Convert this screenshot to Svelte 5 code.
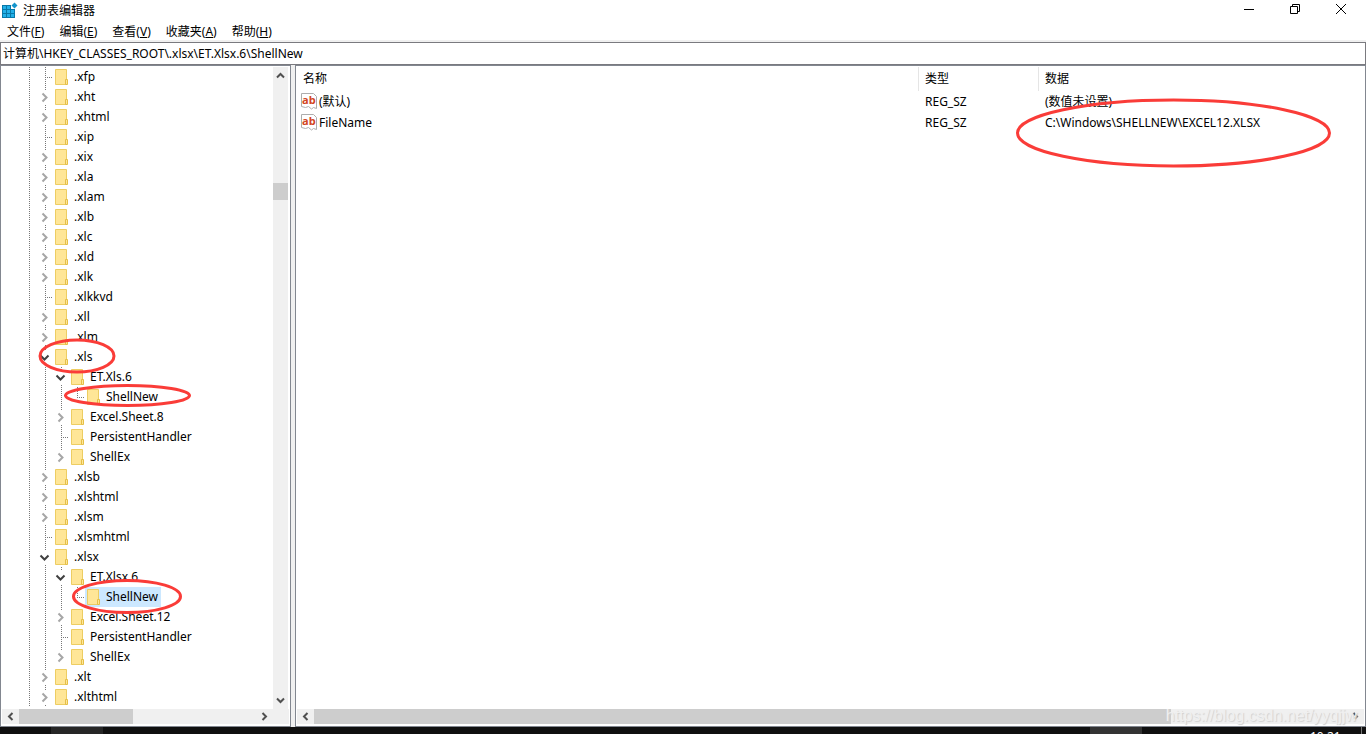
<script>
  const menus = [
    ['文件', 'F'],
    ['编辑', 'E'],
    ['查看', 'V'],
    ['收藏夹', 'A'],
    ['帮助', 'H']
  ];

  // state: 'leaf' | 'closed' | 'open'; last marks the final child of its parent
  const rows = [
    { name: '.xfp', depth: 1, state: 'leaf' },
    { name: '.xht', depth: 1, state: 'closed' },
    { name: '.xhtml', depth: 1, state: 'closed' },
    { name: '.xip', depth: 1, state: 'leaf' },
    { name: '.xix', depth: 1, state: 'closed' },
    { name: '.xla', depth: 1, state: 'closed' },
    { name: '.xlam', depth: 1, state: 'closed' },
    { name: '.xlb', depth: 1, state: 'closed' },
    { name: '.xlc', depth: 1, state: 'closed' },
    { name: '.xld', depth: 1, state: 'closed' },
    { name: '.xlk', depth: 1, state: 'closed' },
    { name: '.xlkkvd', depth: 1, state: 'leaf' },
    { name: '.xll', depth: 1, state: 'closed' },
    { name: '.xlm', depth: 1, state: 'closed' },
    { name: '.xls', depth: 1, state: 'open' },
    { name: 'ET.Xls.6', depth: 2, state: 'open' },
    { name: 'ShellNew', depth: 3, state: 'leaf', last: true },
    { name: 'Excel.Sheet.8', depth: 2, state: 'closed' },
    { name: 'PersistentHandler', depth: 2, state: 'leaf' },
    { name: 'ShellEx', depth: 2, state: 'closed', last: true },
    { name: '.xlsb', depth: 1, state: 'closed' },
    { name: '.xlshtml', depth: 1, state: 'closed' },
    { name: '.xlsm', depth: 1, state: 'closed' },
    { name: '.xlsmhtml', depth: 1, state: 'leaf' },
    { name: '.xlsx', depth: 1, state: 'open' },
    { name: 'ET.Xlsx.6', depth: 2, state: 'open' },
    { name: 'ShellNew', depth: 3, state: 'leaf', last: true, selected: true },
    { name: 'Excel.Sheet.12', depth: 2, state: 'closed' },
    { name: 'PersistentHandler', depth: 2, state: 'leaf' },
    { name: 'ShellEx', depth: 2, state: 'closed', last: true },
    { name: '.xlt', depth: 1, state: 'closed' },
    { name: '.xlthtml', depth: 1, state: 'closed' }
  ];

  const values = [
    { name: '(默认)', type: 'REG_SZ', data: '(数值未设置)' },
    { name: 'FileName', type: 'REG_SZ', data: 'C:\\Windows\\SHELLNEW\\EXCEL12.XLSX' }
  ];

  let address = $state('计算机\\HKEY_CLASSES_ROOT\\.xlsx\\ET.Xlsx.6\\ShellNew');
</script>

{#snippet arrow(d)}
  <svg class="arrow" width="9" height="9" viewBox="0 0 9 9" aria-hidden="true"><path {d} /></svg>
{/snippet}

<div class="window">
  <header class="titlebar">
    <svg width="17" height="17" viewBox="0 0 17 17" aria-hidden="true">
      <path d="M0 3h9v4h4v9H0z" fill="#0878a8" />
      <path d="M1 4h3v3H1zM5 4h3v3H5zM1 8h3v3H1zM5 8h3v3H5zM9 8h3v3H9zM1 12h3v3H1zM5 12h3v3H5zM9 12h3v3H9z" fill="#22b0e8" />
      <path d="M12.500 .5l3 3-3 3-3-3z" fill="#1595cc" />
    </svg>
    <h1>注册表编辑器</h1>
    <div class="controls">
      <button aria-label="最小化"><svg width="12" height="12" viewBox="0 0 12 12"><path d="M1 6.500h10" /></svg></button>
      <button aria-label="还原"><svg width="12" height="12" viewBox="0 0 12 12"><path d="M1.500 3.500h7v7h-7zM3.500 3.500v-2h7v7h-2" /></svg></button>
      <button aria-label="关闭"><svg width="12" height="12" viewBox="0 0 12 12"><path d="M1 1l10 10M11 1L1 11" /></svg></button>
    </div>
  </header>

  <nav class="menubar">
    {#each menus as [label, key]}
      <button>{label}(<u>{key}</u>)</button>
    {/each}
  </nav>

  <input class="address" aria-label="地址" bind:value={address} />

  <main>
    <section class="pane tree-pane">
      <div class="tree-body">
        <ul class="tree">
          {#each rows as row}
            <li>
              {#each Array(row.depth) as _}
                <span class="guide"></span>
              {/each}
              <span class="guide node {row.state}" class:last={row.last}>
                {#if row.state !== 'leaf'}
                  <svg width="11" height="11" viewBox="0 0 11 11" aria-hidden="true">
                    <path d={row.state === 'open' ? 'M1.500 3.500l4 4 4-4' : 'M3.500 1.500l4 4-4 4'} />
                  </svg>
                {/if}
              </span>
              <button class:selected={row.selected}>
                <svg width="14" height="17" viewBox="0 0 14 17" aria-hidden="true">
                  <path d="M.5.5h11v15H.5z" fill="#ffe697" stroke="#edcd62" />
                  <path d="M10.500 10.500h2v5h-2z" fill="#ffe697" stroke="#e5bf48" />
                </svg>
                <span>{row.name}</span>
              </button>
            </li>
          {/each}
        </ul>
        <div class="vscroll">
          {@render arrow('M1 6.500l3.500-3.500 3.500 3.500')}
          <div class="vtrack"><div class="vthumb"></div></div>
          {@render arrow('M1 2.500l3.500 3.500 3.500-3.500')}
        </div>
      </div>
      <div class="hscroll">
        {@render arrow('M6.500 1l-3.500 3.500 3.500 3.500')}
        <div class="htrack"><div class="hthumb" style="width: 48%"></div></div>
        {@render arrow('M2.500 1l3.500 3.500-3.500 3.500')}
      </div>
    </section>

    <section class="pane list-pane">
      <div class="list-body">
        <table>
          <colgroup><col class="c1" /><col class="c2" /><col /></colgroup>
          <thead>
            <tr><th>名称</th><th>类型</th><th>数据</th></tr>
          </thead>
          <tbody>
            {#each values as v}
              <tr>
                <td>
                  <div class="name">
                    <svg width="17" height="17" viewBox="0 0 17 17" aria-hidden="true">
                      <path d="M.5.500h12l3 3v12l-3-1-2 1.500-3-2.500-3 1-4-1z" fill="#fff" stroke="#adadad" />
                      <text x="1" y="11">ab</text>
                    </svg>
                    <span>{v.name}</span>
                  </div>
                </td>
                <td>{v.type}</td>
                <td>{v.data}</td>
              </tr>
            {/each}
          </tbody>
        </table>
      </div>
      <div class="hscroll">
        {@render arrow('M6.500 1l-3.500 3.500 3.500 3.500')}
        <div class="htrack"><div class="hthumb" style="width: 83%"></div></div>
        {@render arrow('M2.500 1l3.500 3.500-3.500 3.500')}
      </div>
    </section>
  </main>

  <footer class="taskbar">
    <span class="task"></span>
    <span class="task second"></span>
    <time>10:21</time>
  </footer>

  <svg class="marks" aria-hidden="true">
    <ellipse cx="77" cy="356" rx="37" ry="16" />
    <ellipse cx="127.500" cy="395.500" rx="62" ry="10" />
    <ellipse cx="127" cy="596.500" rx="53.500" ry="16" />
    <ellipse cx="1173.500" cy="133" rx="156" ry="33" />
  </svg>
  <span class="watermark">https://blog.csdn.net/yyqjjw</span>
</div>

<style>
  :global(body) {
    margin: 0;
    overflow: hidden;
  }
  .window {
    position: relative;
    display: flex;
    flex-direction: column;
    height: 100vh;
    overflow: hidden;
    background: #fff;
    color: #000;
    font: 12px/20px 'Noto Sans', 'Noto Sans CJK SC', sans-serif;
  }
  button, input {
    border: 0;
    padding: 0;
    background: none;
    color: inherit;
    font: inherit;
  }
  svg {
    display: block;
    flex: none;
  }
  .titlebar {
    display: flex;
    align-items: center;
    gap: 4px;
    height: 21px;
    padding-left: 2px;
  }
  h1 {
    margin: 0;
    font-size: 12px;
    line-height: 20px;
    font-weight: 400;
  }
  .controls {
    display: flex;
    margin-left: auto;
    padding: 0 2px 3px 0;
  }
  .controls button {
    display: grid;
    place-items: center;
    width: 46px;
    height: 18px;
  }
  .controls path {
    fill: none;
    stroke: #000;
  }
  .menubar {
    display: flex;
    gap: 15px;
    height: 19px;
    padding: 0 7px;
    border-bottom: 2px solid #f0f0f0;
  }
  .menubar button {
    height: 21px;
  }
  .address {
    flex: none;
    height: 23px;
    box-sizing: border-box;
    border: 1px solid #7a7a7f;
    padding: 0 2px 2px;
  }
  main {
    flex: 1;
    display: flex;
    gap: 4px;
    min-height: 0;
    background: #f0f0f0;
  }
  .pane {
    display: flex;
    flex-direction: column;
    box-sizing: border-box;
    border: 1px solid #828790;
    background: #fff;
    min-width: 0;
  }
  .tree-pane {
    width: 291px;
    flex: none;
  }
  .list-pane {
    flex: 1;
  }
  .tree-body {
    flex: 1;
    display: flex;
    min-height: 0;
    padding: 1px 2px 0 0;
  }
  .tree {
    flex: 1;
    margin: 0;
    padding: 0 0 0 20px;
    list-style: none;
    overflow: hidden;
  }
  li {
    display: flex;
    height: 20px;
  }
  .guide {
    flex: none;
    width: 16px;
    height: 20px;
    background: repeating-linear-gradient(#777 0 1px, transparent 1px 2px) 8px 0 / 1px 100% no-repeat;
  }
  .node {
    display: flex;
    align-items: center;
    box-sizing: border-box;
    padding-left: 2px;
  }
  .leaf {
    background:
      repeating-linear-gradient(#777 0 1px, transparent 1px 2px) 8px 0 / 1px 100% no-repeat,
      repeating-linear-gradient(90deg, #777 0 1px, transparent 1px 2px) 8px 10px / 8px 1px no-repeat;
  }
  .leaf.last {
    background-size: 1px 10px, 8px 1px;
  }
  .closed, .open {
    background:
      repeating-linear-gradient(#777 0 1px, transparent 1px 2px) 8px 0 / 1px 3px no-repeat,
      repeating-linear-gradient(#777 0 1px, transparent 1px 2px) 8px 18px / 1px 2px no-repeat;
  }
  .closed.last {
    background-size: 1px 3px, 0 0;
  }
  .node path {
    fill: none;
    stroke: #a6a6a6;
    stroke-width: 2;
  }
  .node.open path {
    stroke: #404040;
  }
  li button {
    display: flex;
    align-items: center;
    gap: 2px;
    height: 20px;
    padding-left: 2px;
    white-space: nowrap;
  }
  li button span {
    padding: 0 3px;
  }
  .selected {
    background: #cce8ff;
  }
  .vscroll, .hscroll {
    display: flex;
    align-items: center;
    background: #f0f0f0;
  }
  .vscroll {
    flex-direction: column;
    width: 15px;
    padding: 4px 0;
  }
  .vtrack {
    flex: 1;
    align-self: stretch;
    padding-top: 103px;
  }
  .vthumb {
    height: 17px;
    background: #cdcdcd;
  }
  .hscroll {
    flex: none;
    height: 15px;
    margin: 0 1px 2px;
    padding: 0 4px;
  }
  .tree-pane .hscroll {
    padding-right: 20px;
  }
  .htrack {
    flex: 1;
    height: 15px;
    padding: 0 4px;
  }
  .hthumb {
    height: 15px;
    background: #cdcdcd;
  }
  .arrow path {
    fill: none;
    stroke: #505050;
    stroke-width: 2;
  }
  .list-body {
    flex: 1;
    padding-top: 1px;
  }
  table {
    width: 100%;
    table-layout: fixed;
    border-spacing: 0;
  }
  .c1 {
    width: 623px;
  }
  .c2 {
    width: 120px;
  }
  th {
    height: 24px;
    padding: 0 6px;
    border-right: 1px solid #e5e5e5;
    font-weight: 400;
    text-align: left;
  }
  th:first-child {
    padding-left: 7px;
  }
  th:last-child {
    border: 0;
  }
  td {
    height: 21px;
    padding: 0 6px;
  }
  .name {
    display: flex;
    align-items: center;
    gap: 1px;
    margin-left: -1px;
  }
  .name text {
    fill: #d2451e;
    font: bold 11px 'Open Sans', sans-serif;
  }
  .taskbar {
    flex: none;
    display: flex;
    height: 7px;
    overflow: hidden;
    background: #101010;
    color: #fff;
    padding-left: 51px;
    padding-right: 4px;
  }
  .task {
    width: 52px;
    background: #262626;
  }
  .second {
    margin-left: auto;
    background: #333;
  }
  time {
    width: 51px;
    padding-left: 168px;
    line-height: 20px;
    border-right: 1px solid #777;
  }
  .marks {
    position: absolute;
    inset: 0;
    width: 100%;
    height: 100%;
    pointer-events: none;
  }
  .marks ellipse {
    fill: none;
    stroke: #fa3c38;
    stroke-width: 3;
  }
  .watermark {
    position: absolute;
    right: 9px;
    bottom: 8px;
    color: #f0f0f0;
    font: 16px/20px 'Liberation Sans', sans-serif;
    text-shadow: 1px 1px 1px #d0d0d0;
    pointer-events: none;
  }
</style>
